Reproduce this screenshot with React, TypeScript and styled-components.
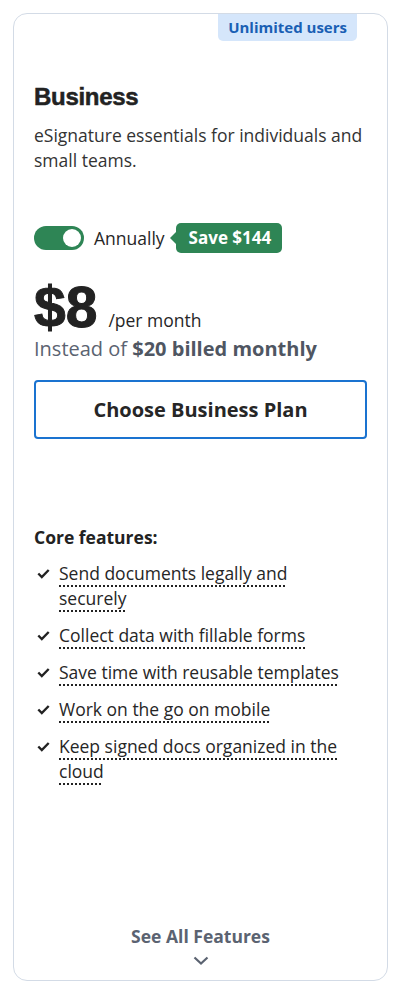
import React from 'react'
import styled, { createGlobalStyle } from 'styled-components'

const GlobalStyle = createGlobalStyle`
  body {
    margin: 0;
    background: #ffffff;
    font-family: "Open Sans", "Liberation Sans", sans-serif;
    color: #262626;
  }
`

const Page = styled.div`
  padding: 13px 15px 14px 13px;
`

const Card = styled.div`
  box-sizing: border-box;
  height: 968px;
  border: 1px solid #d3dbe6;
  border-radius: 14px;
  padding: 0 20px 15px 20px;
  display: flex;
  flex-direction: column;
`

const BadgeRow = styled.div`
  display: flex;
  justify-content: flex-end;
  margin-right: 10px;
`

const Badge = styled.div`
  background: #d5e6fb;
  color: #1a5fb4;
  font-weight: 700;
  font-size: 15px;
  line-height: 27px;
  padding: 0 10px;
  border-radius: 0 0 5px 5px;
`

const Title = styled.h2`
  margin: 42px 0 0 0;
  font-family: "Liberation Sans", Arial, sans-serif;
  font-size: 24px;
  font-weight: 700;
  letter-spacing: -0.3px;
  line-height: 28px;
  color: #222;
  -webkit-text-stroke: 0.5px #222;
`

const Description = styled.p`
  margin: 12px 0 0 0;
  font-size: 17.5px;
  line-height: 25px;
  color: #333;
`

const ToggleRow = styled.div`
  display: flex;
  align-items: center;
  margin-top: 50px;
`

const Switch = styled.div`
  box-sizing: border-box;
  width: 50px;
  height: 24px;
  border-radius: 12px;
  background: #2e8555;
  padding: 3px;
  display: flex;
  justify-content: flex-end;
`

const Knob = styled.div`
  width: 18px;
  height: 18px;
  border-radius: 50%;
  background: #fff;
`

const ToggleLabel = styled.span`
  margin-left: 10px;
  font-size: 17.5px;
  color: #262626;
`

const SaveTag = styled.span`
  position: relative;
  margin-left: 11px;
  background: #2e8555;
  color: #fff;
  font-weight: 700;
  font-size: 17px;
  line-height: 30px;
  padding: 0 11px 0 13px;
  border-radius: 5px;

  &::before {
    content: '';
    position: absolute;
    left: -6px;
    top: 9px;
    border-top: 6px solid transparent;
    border-bottom: 6px solid transparent;
    border-right: 6px solid #2e8555;
  }
`

const PriceRow = styled.div`
  display: flex;
  align-items: baseline;
  margin-top: 26px;
`

const Price = styled.span`
  font-family: "Liberation Sans", Arial, sans-serif;
  font-weight: 700;
  font-size: 57px;
  line-height: 56px;
  color: #222;
  -webkit-text-stroke: 1px #222;
`

const PerMonth = styled.span`
  margin-left: 11px;
  font-size: 17.5px;
  color: #262626;
`

const Instead = styled.div`
  font-size: 20px;
  line-height: 28px;
  color: #5b6371;

  b {
    font-weight: 700;
    color: #4f5662;
  }
`

const PlanButton = styled.button`
  box-sizing: border-box;
  margin-top: 17px;
  width: 100%;
  height: 59px;
  background: #fff;
  border: 2px solid #1a73d0;
  border-radius: 4px;
  font-family: "Open Sans", sans-serif;
  font-weight: 700;
  font-size: 20px;
  color: #262626;
`

const FeaturesTitle = styled.div`
  margin-top: 86px;
  font-weight: 700;
  font-size: 17.5px;
  line-height: 24px;
  color: #222;
`

const FeatureList = styled.ul`
  list-style: none;
  margin: 12px 0 0 0;
  padding: 0 0 0 3px;
`

const FeatureItem = styled.li`
  display: flex;
  align-items: flex-start;
  margin-bottom: 12px;
  font-size: 17.5px;
  line-height: 25px;
  color: #262626;
`

const Check = styled.svg`
  flex: none;
  width: 13px;
  height: 13px;
  margin-top: 6px;
  margin-right: 9px;
`

const FeatureText = styled.span`
  text-decoration: underline dotted #222;
  text-decoration-thickness: 2px;
  text-underline-offset: 5px;
  max-width: 290px;
`

const Footer = styled.div`
  margin-top: auto;
  display: flex;
  flex-direction: column;
  align-items: center;
  gap: 8px;
  color: #5b6371;
  font-weight: 700;
  font-size: 17.5px;
  line-height: 24px;
`

const features = [
  'Send documents legally and securely',
  'Collect data with fillable forms',
  'Save time with reusable templates',
  'Work on the go on mobile',
  'Keep signed docs organized in the cloud',
]

const App = (): JSX.Element => (
  <Page>
    <GlobalStyle />
    <Card>
      <BadgeRow>
        <Badge>Unlimited users</Badge>
      </BadgeRow>
      <Title>Business</Title>
      <Description>eSignature essentials for individuals and small teams.</Description>
      <ToggleRow>
        <Switch>
          <Knob />
        </Switch>
        <ToggleLabel>Annually</ToggleLabel>
        <SaveTag>Save $144</SaveTag>
      </ToggleRow>
      <PriceRow>
        <Price>$8</Price>
        <PerMonth>/per month</PerMonth>
      </PriceRow>
      <Instead>
        Instead of <b>$20 billed monthly</b>
      </Instead>
      <PlanButton>Choose Business Plan</PlanButton>
      <FeaturesTitle>Core features:</FeaturesTitle>
      <FeatureList>
        {features.map((f) => (
          <FeatureItem key={f}>
            <Check viewBox="0 0 13 13">
              <path d="M1.3 6.5 L4.8 10 L11.7 3" fill="none" stroke="#222" strokeWidth="2.4" />
            </Check>
            <FeatureText>{f}</FeatureText>
          </FeatureItem>
        ))}
      </FeatureList>
      <Footer>
        See All Features
        <svg width="16" height="9" viewBox="0 0 16 9">
          <path d="M1.5 1.5 L8 7.5 L14.5 1.5" fill="none" stroke="#5b6371" strokeWidth="2.2" />
        </svg>
      </Footer>
    </Card>
  </Page>
)

export default App
